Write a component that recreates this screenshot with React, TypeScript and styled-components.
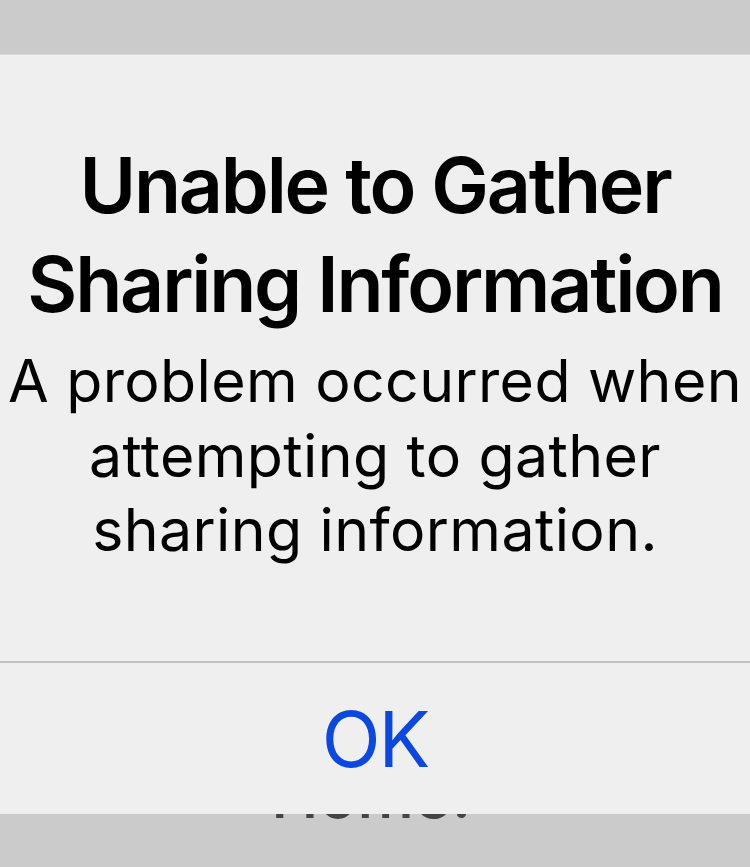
import styled, { createGlobalStyle } from 'styled-components';

const GlobalStyle = createGlobalStyle`
  html,
  body {
    margin: 0;
    padding: 0;
    background: #cbcbcb;
  }

  body {
    font-family: Inter, 'Noto Sans', 'Liberation Sans', sans-serif;
    -webkit-font-smoothing: antialiased;
  }
`;

export default function App() {
  return (
    <>
      <GlobalStyle />
      <Screen>
        <TopBar />
        <Alert>
          <Content>
            <Title>
              Unable to Gather
              <br />
              Sharing Information
            </Title>
            <Message>
              A problem occurred when
              <br />
              attempting to gather
              <br />
              sharing information.
            </Message>
          </Content>
          <Actions>
            <ActionButton type='button'>OK</ActionButton>
          </Actions>
        </Alert>
        <Footer>
          <FooterLabel>Home.</FooterLabel>
        </Footer>
      </Screen>
    </>
  );
}

const Screen = styled.div`
  width: 750px;
  height: 867px;
  display: flex;
  flex-direction: column;
  overflow: hidden;
`;

const TopBar = styled.div`
  height: 54px;
  flex-shrink: 0;
  background: #cbcbcb;
`;

const Alert = styled.div`
  height: 760px;
  flex-shrink: 0;
  display: flex;
  flex-direction: column;
  background: #efefef;
  border-top: 1px solid #d9d9d9;
  box-sizing: border-box;
`;

const Content = styled.div`
  height: 608px;
  box-sizing: border-box;
  padding-top: 81px;
  display: flex;
  flex-direction: column;
  align-items: center;
  gap: 10px;
  border-bottom: 2px solid #c2c2c2;
  text-align: center;
`;

const Title = styled.h1`
  margin: 0;
  font-size: 77px;
  line-height: 99px;
  font-weight: 600;
  letter-spacing: -2.2px;
  color: #000;
  white-space: nowrap;
`;

const Message = styled.p`
  margin: 0;
  font-size: 59px;
  line-height: 74.5px;
  font-weight: 400;
  letter-spacing: 0.4px;
  color: #000;
  white-space: nowrap;
`;

const Actions = styled.div`
  flex: 1;
  display: flex;
  justify-content: center;
  align-items: center;
  padding-top: 2px;
`;

const ActionButton = styled.button`
  border: none;
  background: none;
  padding: 0;
  font-family: inherit;
  font-size: 77px;
  line-height: 1;
  font-weight: 400;
  letter-spacing: -2px;
  color: #0a48df;
  cursor: pointer;
`;

const Footer = styled.div`
  flex: 1;
  overflow: hidden;
  background: #cbcbcb;
  display: flex;
  justify-content: center;
`;

const FooterLabel = styled.span`
  margin-top: -51px;
  margin-right: 8px;
  font-size: 64px;
  line-height: 64px;
  font-weight: 500;
  color: #444;
`;
